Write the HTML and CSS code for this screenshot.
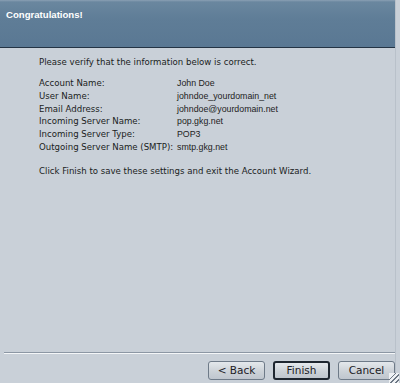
FILE: index.html
```html
<!DOCTYPE html>
<html lang="en">
<head>
  <meta charset="UTF-8">
  <title>Congratulations!</title>
  <link rel="stylesheet" href="styles.css">
</head>
<body>
  <div class="wizard">
    <div class="head">
      <p>Congratulations!</p>
    </div>
    <div class="main">
      <p class="intro">Please verify that the information below is correct.</p>
      <div class="info">
        <span class="lab">Account Name:</span><span class="val">John Doe</span>
        <span class="lab">User Name:</span><span class="val">johndoe_yourdomain_net</span>
        <span class="lab">Email Address:</span><span class="val">johndoe@yourdomain.net</span>
        <span class="lab">Incoming Server Name:</span><span class="val">pop.gkg.net</span>
        <span class="lab">Incoming Server Type:</span><span class="val">POP3</span>
        <span class="lab">Outgoing Server Name (SMTP):</span><span class="val">smtp.gkg.net</span>
      </div>
      <p class="outro">Click Finish to save these settings and exit the Account Wizard.</p>
    </div>
    <div class="foot">
      <div class="btns">
        <span class="btn">&lt; Back</span>
        <span class="btn def">Finish</span>
        <span class="btn">Cancel</span>
      </div>
      <i class="grip"></i>
    </div>
  </div>
</body>
</html>
```

FILE: styles.css
```css
*{
  margin: 0;
  padding: 0;
  box-sizing: border-box;
}
body{
  width: 400px;
  height: 383px;
  overflow: hidden;
  background-color: #c9d0d8;
  font-family: "DejaVu Sans", sans-serif;
  color: #1a1d22;
}
.wizard{
  height: 383px;
  display: flex;
  flex-direction: column;
  border-right: 1px solid #b9c1ca;
  width: 396px;
}
.wizard .head{
  height: 48px;
  background: linear-gradient(180deg, #8aa0b4 0, #6a879f 2px, #5f7d97 40%, #5a7893 100%);
  border-bottom: 1px solid #243444;
  padding: 9px 0 0 6px;
}
.wizard .head p{
  font-family: "Liberation Sans", Arial, sans-serif;
  font-size: 9.6px;
  font-weight: bold;
  color: #fff;
}
.wizard .main{
  flex: 1;
  padding: 9px 0 0 39px;
  font-size: 8.6px;
}
.wizard .main p.intro{
  margin-bottom: 10px;
}
.wizard .info{
  display: grid;
  grid-template-columns: 138px auto;
  line-height: 12.8px;
}
.wizard .info span.val{
  font-family: "Liberation Sans", Arial, sans-serif;
  font-size: 8.8px;
  color: #222;
}
.wizard .main p.outro{
  margin-top: 12px;
}
.wizard .foot{
  height: 31px;
  border-top: 1px solid #8c97a4;
  box-shadow: inset 0 1px 0 #f4f6f8;
  margin-left: 4px;
  position: relative;
}
.wizard .btns{
  display: flex;
  justify-content: flex-end;
  gap: 8px;
  padding-top: 8px;
}
.wizard .btn{
  width: 57px;
  height: 19px;
  line-height: 17px;
  text-align: center;
  font-size: 10.5px;
  color: #1c2026;
  background: linear-gradient(180deg, #e4e8ec 0, #ccd2d8 55%, #bfc6ce 100%);
  border: 1px solid #6e7a88;
  border-radius: 3px;
}
.wizard .btn.def{
  border: 2px solid #1e2630;
  line-height: 15px;
}
.wizard .grip{
  position: absolute;
  right: -4px;
  bottom: 0;
  width: 10px;
  height: 10px;
  background: linear-gradient(135deg, #eef1f4 0, #eef1f4 30%, #6c7784 31%, #6c7784 38%, #eef1f4 39%, #eef1f4 54%, #6c7784 55%, #6c7784 62%, #eef1f4 63%, #eef1f4 78%, #6c7784 79%, #6c7784 86%, #eef1f4 87%);
}
```
